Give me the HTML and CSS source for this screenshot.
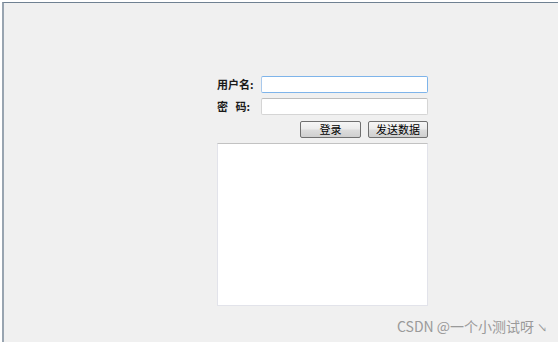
FILE: index.html
```html
<!DOCTYPE html>
<html lang="zh">
<head>
<meta charset="utf-8">
<title>登录</title>
<link rel="stylesheet" href="styles.css">
</head>
<body>
<div class="window">
  <div class="form">
    <div class="row">
      <label class="label">用户名:</label>
      <input class="field focused" type="text">
    </div>
    <div class="row">
      <label class="label">密&nbsp;&nbsp;&nbsp;码:</label>
      <input class="field" type="password">
    </div>
    <div class="actions">
      <button class="btn btn-login">登录</button>
      <button class="btn btn-send">发送数据</button>
    </div>
    <textarea class="log"></textarea>
  </div>
  <div class="watermark">CSDN @一个小测试呀 <span class="arrow">↘</span></div>
</div>
</body>
</html>
```
FILE: styles.css
```css
html, body {
  margin: 0;
  padding: 0;
  background: #ffffff;
}
body {
  font-family: "Noto Sans CJK SC", "Liberation Sans", sans-serif;
  font-size: 12px;
  color: #000;
}
.window {
  position: relative;
  margin: 2px 0 0 2px;
  height: 340px;
  box-sizing: border-box;
  background: #f0f0f0;
  border-top: 1px solid #6f8192;
  border-left: 2px solid #98a4b0;
}
.form {
  display: flex;
  flex-direction: column;
  width: 211px;
  padding: 73px 0 0 213px;
}
.row {
  display: flex;
  align-items: center;
  height: 17px;
  margin-bottom: 5px;
}
.row + .row {
  margin-bottom: 6px;
}
.label {
  width: 44px;
  font-size: 11px;
  line-height: 17px;
  font-weight: bold;
  color: #1a1a1a;
  white-space: pre;
}
.field {
  width: 167px;
  height: 17px;
  box-sizing: border-box;
  margin: 0;
  padding: 0 2px;
  background: #fff;
  border: 1px solid #d5d5d5;
  border-top-color: #bdbdbd;
  border-radius: 2px;
  outline: none;
}
.field.focused {
  border-color: #7eb4ea;
  border-left-color: #a9c9ec;
}
.actions {
  display: flex;
  justify-content: flex-end;
  gap: 7px;
  height: 17px;
  margin-bottom: 5px;
}
.btn {
  height: 17px;
  box-sizing: border-box;
  margin: 0;
  padding: 0;
  font-family: "Noto Sans CJK SC", sans-serif;
  font-size: 11px;
  line-height: 15px;
  color: #000;
  background: linear-gradient(#f6f6f6 0%, #ececec 45%, #dcdcdc 55%, #cfcfcf 100%);
  border: 1px solid #707070;
  border-radius: 2px;
}
.btn-login { width: 61px; }
.btn-send { width: 60px; }
.log {
  width: 211px;
  height: 163px;
  box-sizing: border-box;
  margin: 0;
  padding: 2px;
  background: #fff;
  border: 1px solid #e2e3ea;
  border-top-color: #c2c2c2;
  resize: none;
  outline: none;
}
.watermark {
  position: absolute;
  left: 393px;
  top: 315px;
  font-family: "Noto Sans CJK SC", sans-serif;
  font-size: 14px;
  line-height: 16px;
  color: #9a9a9a;
  white-space: nowrap;
}
.arrow {
  font-size: 10px;
}
```
